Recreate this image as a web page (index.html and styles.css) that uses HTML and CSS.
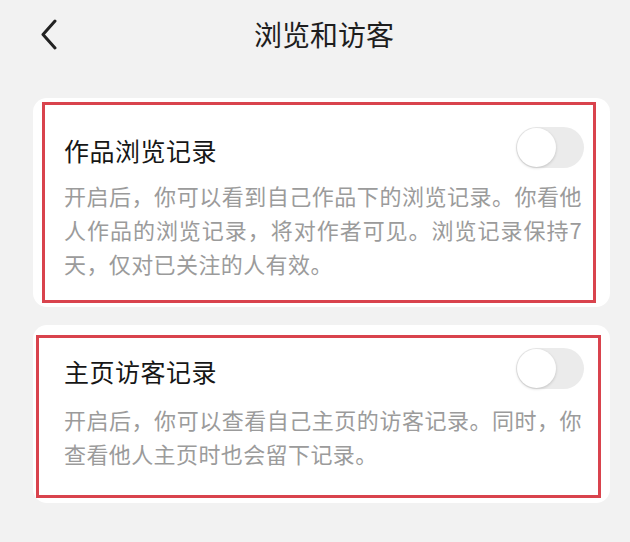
FILE: index.html
```html
<!DOCTYPE html>
<html lang="zh-CN">
<head>
    <meta charset="UTF-8">
    <meta name="viewport" content="width=device-width, initial-scale=1.0">
    <title>浏览和访客</title>
    <link rel="stylesheet" href="styles.css">
</head>
<body>
    <header class="topbar">
        <span class="back">
            <svg width="17" height="31" viewBox="0 0 17 31">
                <path d="M15 2 L3 15.5 L15 29" fill="none" stroke="#222" stroke-width="3" stroke-linecap="round" stroke-linejoin="round"/>
            </svg>
        </span>
        <h1 class="title">浏览和访客</h1>
    </header>

    <main class="list">
        <section class="card card-works">
            <div class="card-row">
                <h2 class="card-title">作品浏览记录</h2>
                <span class="switch"><span class="knob"></span></span>
            </div>
            <p class="card-desc">开启后，你可以看到自己作品下的浏览记录。你看他人作品的浏览记录，将对作者可见。浏览记录保持7天，仅对已关注的人有效。</p>
            <div class="mark mark-works"></div>
        </section>

        <section class="card card-home">
            <div class="card-row">
                <h2 class="card-title">主页访客记录</h2>
                <span class="switch"><span class="knob"></span></span>
            </div>
            <p class="card-desc">开启后，你可以查看自己主页的访客记录。同时，你查看他人主页时也会留下记录。</p>
            <div class="mark mark-home"></div>
        </section>
    </main>
</body>
</html>
```

FILE: styles.css
```css
body {
    margin: 0;
    padding: 0;
    background: #f2f2f2;
    font-family: "Noto Sans CJK SC", "Noto Sans", sans-serif;
    color: #1a1a1a;
}
.topbar {
    display: flex;
    align-items: center;
    height: 68px;
    padding: 0 39px 0 40px;
}
.back {
    display: flex;
    width: 17px;
    height: 31px;
}
.title {
    flex: 1;
    margin: 0;
    text-align: center;
    font-size: 28px;
    font-weight: 400;
    color: #1e1e1e;
}
.list {
    display: flex;
    flex-direction: column;
    gap: 18px;
    margin: 30px 20px 0 33px;
}
.card {
    position: relative;
    background: #fff;
    border-radius: 14px;
    padding: 29px 26px 27px 31px;
}
.card-home {
    padding-top: 23px;
    padding-bottom: 33px;
}
.card-row {
    display: flex;
    align-items: center;
    justify-content: space-between;
    height: 41px;
}
.card-title {
    margin: 0;
    padding-top: 5px;
    font-size: 25px;
    font-weight: 400;
    letter-spacing: 0.5px;
    color: #161616;
}
.switch {
    position: relative;
    width: 68px;
    height: 41px;
    border-radius: 21px;
    background: #ebebeb;
}
.knob {
    position: absolute;
    left: 1px;
    top: 1px;
    width: 39px;
    height: 39px;
    border-radius: 50%;
    background: #fff;
    box-shadow: 0 1px 3px rgba(0, 0, 0, 0.18);
}
.card-desc {
    width: 518px;
    margin: 10px 0 0;
    font-size: 22px;
    line-height: 34px;
    letter-spacing: 0.4px;
    text-align: justify;
    color: #9b9b9b;
}
.card-home .card-desc {
    margin-top: 13px;
}
.mark {
    position: absolute;
    border: 3px solid #d9434d;
    pointer-events: none;
}
.mark-works {
    top: 4px;
    left: 9px;
    right: 14px;
    bottom: 4px;
}
.mark-home {
    top: 10px;
    left: 3px;
    right: 9px;
    bottom: 5px;
}
```
